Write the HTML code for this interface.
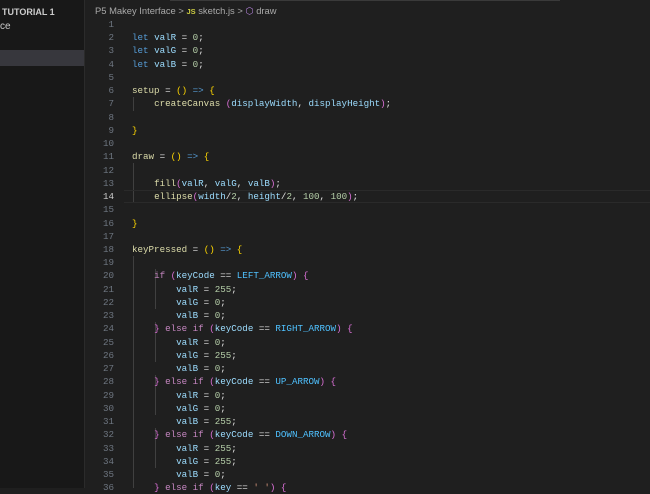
<!DOCTYPE html>
<html><head><meta charset="utf-8"><style>
html,body{margin:0;padding:0;width:650px;height:488px;overflow:hidden;background:#1f1f1f;font-family:"Liberation Sans",sans-serif}
#side{position:absolute;left:0;top:0;width:84px;height:488px;background:#181818;border-right:1px solid #2b2b2b}
#side .t{position:absolute;left:2px;top:7px;font-size:9px;font-weight:bold;color:#ccc;white-space:nowrap}
#side .c{position:absolute;left:0;top:21px;font-size:10px;color:#ccc}
#side .sel{position:absolute;left:0;top:50px;width:84px;height:16px;background:#37373d}
#topline{position:absolute;left:170px;top:0;width:390px;height:1px;background:#3a3a3a}
#crumb{position:absolute;left:95px;top:5px;font-size:9.4px;color:#a9a9a9;white-space:nowrap}
#crumb .js{color:#cbcb41;font-weight:bold;font-size:7.5px}
#crumb .cube{color:#b180d7}
#code{position:absolute;left:0;top:18px;font-family:"Liberation Mono",monospace;font-size:9.2px}
.l{position:relative;height:13.24px;line-height:13.24px;white-space:pre;color:#e0e0e0}
.n{position:absolute;left:90px;width:24px;text-align:right;color:#6e7681}
.x{position:absolute;left:132px}
.cur .n{color:#cccccc}
.cur::before{content:"";position:absolute;left:124px;width:526px;top:0;bottom:0;border-top:1px solid #2a2a2a;border-bottom:1px solid #2a2a2a}
.k{color:#569cd6}.v{color:#9cdcfe}.d{color:#b5cea8}.f{color:#dcdcaa}.b{color:#ffd700}.p{color:#da70d6}.c2{color:#c586c0}.o{color:#4fc1ff}.s{color:#ce9178}
.g{position:absolute;width:1px;background:#404040}
</style></head><body>
<div id="side"><div class="t">TUTORIAL 1</div><div class="c">ce</div><div class="sel"></div></div>
<div id="topline"></div>
<div id="crumb">P5 Makey Interface &gt; <span class="js">JS</span> sketch.js &gt; <span class="cube">&#x2B21;</span> draw</div>
<div class="g" style="left:133px;top:97px;height:14px"></div>
<div class="g" style="left:133px;top:163px;height:40px"></div>
<div class="g" style="left:133px;top:256px;height:232px"></div>
<div class="g" style="left:155px;top:269px;height:40px"></div>
<div class="g" style="left:155px;top:322px;height:40px"></div>
<div class="g" style="left:155px;top:375px;height:40px"></div>
<div class="g" style="left:155px;top:428px;height:40px"></div>
<div id="code">
<div class="l"><span class="n">1</span></div>
<div class="l"><span class="n">2</span><span class="x"><span class="k">let</span> <span class="v">valR</span> = <span class="d">0</span>;</span></div>
<div class="l"><span class="n">3</span><span class="x"><span class="k">let</span> <span class="v">valG</span> = <span class="d">0</span>;</span></div>
<div class="l"><span class="n">4</span><span class="x"><span class="k">let</span> <span class="v">valB</span> = <span class="d">0</span>;</span></div>
<div class="l"><span class="n">5</span></div>
<div class="l"><span class="n">6</span><span class="x"><span class="f">setup</span> = <span class="b">()</span> <span class="k">=&gt;</span> <span class="b">{</span></span></div>
<div class="l"><span class="n">7</span><span class="x">    <span class="f">createCanvas</span> <span class="p">(</span><span class="v">displayWidth</span>, <span class="v">displayHeight</span><span class="p">)</span>;</span></div>
<div class="l"><span class="n">8</span></div>
<div class="l"><span class="n">9</span><span class="x"><span class="b">}</span></span></div>
<div class="l"><span class="n">10</span></div>
<div class="l"><span class="n">11</span><span class="x"><span class="f">draw</span> = <span class="b">()</span> <span class="k">=&gt;</span> <span class="b">{</span></span></div>
<div class="l"><span class="n">12</span></div>
<div class="l"><span class="n">13</span><span class="x">    <span class="f">fill</span><span class="p">(</span><span class="v">valR</span>, <span class="v">valG</span>, <span class="v">valB</span><span class="p">)</span>;</span></div>
<div class="l cur"><span class="n">14</span><span class="x">    <span class="f">ellipse</span><span class="p">(</span><span class="v">width</span>/<span class="d">2</span>, <span class="v">height</span>/<span class="d">2</span>, <span class="d">100</span>, <span class="d">100</span><span class="p">)</span>;</span></div>
<div class="l"><span class="n">15</span></div>
<div class="l"><span class="n">16</span><span class="x"><span class="b">}</span></span></div>
<div class="l"><span class="n">17</span></div>
<div class="l"><span class="n">18</span><span class="x"><span class="f">keyPressed</span> = <span class="b">()</span> <span class="k">=&gt;</span> <span class="b">{</span></span></div>
<div class="l"><span class="n">19</span></div>
<div class="l"><span class="n">20</span><span class="x">    <span class="c2">if</span> <span class="p">(</span><span class="v">keyCode</span> == <span class="o">LEFT_ARROW</span><span class="p">)</span> <span class="p">{</span></span></div>
<div class="l"><span class="n">21</span><span class="x">        <span class="v">valR</span> = <span class="d">255</span>;</span></div>
<div class="l"><span class="n">22</span><span class="x">        <span class="v">valG</span> = <span class="d">0</span>;</span></div>
<div class="l"><span class="n">23</span><span class="x">        <span class="v">valB</span> = <span class="d">0</span>;</span></div>
<div class="l"><span class="n">24</span><span class="x">    <span class="p">}</span> <span class="c2">else if</span> <span class="p">(</span><span class="v">keyCode</span> == <span class="o">RIGHT_ARROW</span><span class="p">)</span> <span class="p">{</span></span></div>
<div class="l"><span class="n">25</span><span class="x">        <span class="v">valR</span> = <span class="d">0</span>;</span></div>
<div class="l"><span class="n">26</span><span class="x">        <span class="v">valG</span> = <span class="d">255</span>;</span></div>
<div class="l"><span class="n">27</span><span class="x">        <span class="v">valB</span> = <span class="d">0</span>;</span></div>
<div class="l"><span class="n">28</span><span class="x">    <span class="p">}</span> <span class="c2">else if</span> <span class="p">(</span><span class="v">keyCode</span> == <span class="o">UP_ARROW</span><span class="p">)</span> <span class="p">{</span></span></div>
<div class="l"><span class="n">29</span><span class="x">        <span class="v">valR</span> = <span class="d">0</span>;</span></div>
<div class="l"><span class="n">30</span><span class="x">        <span class="v">valG</span> = <span class="d">0</span>;</span></div>
<div class="l"><span class="n">31</span><span class="x">        <span class="v">valB</span> = <span class="d">255</span>;</span></div>
<div class="l"><span class="n">32</span><span class="x">    <span class="p">}</span> <span class="c2">else if</span> <span class="p">(</span><span class="v">keyCode</span> == <span class="o">DOWN_ARROW</span><span class="p">)</span> <span class="p">{</span></span></div>
<div class="l"><span class="n">33</span><span class="x">        <span class="v">valR</span> = <span class="d">255</span>;</span></div>
<div class="l"><span class="n">34</span><span class="x">        <span class="v">valG</span> = <span class="d">255</span>;</span></div>
<div class="l"><span class="n">35</span><span class="x">        <span class="v">valB</span> = <span class="d">0</span>;</span></div>
<div class="l"><span class="n">36</span><span class="x">    <span class="p">}</span> <span class="c2">else if</span> <span class="p">(</span><span class="v">key</span> == <span class="s">' '</span><span class="p">)</span> <span class="p">{</span></span></div>
</div>
</body></html>
